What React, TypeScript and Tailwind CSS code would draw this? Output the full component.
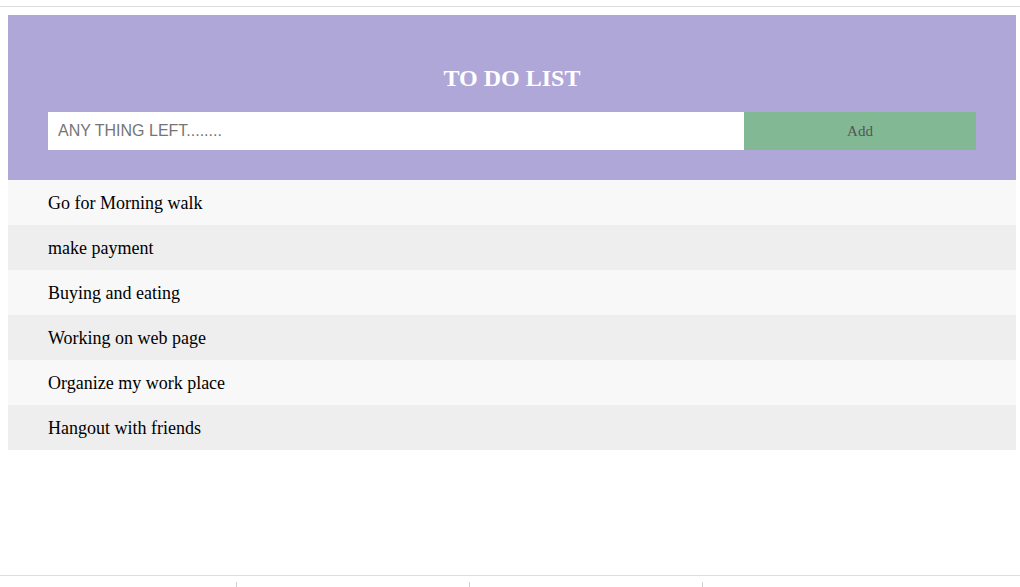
import { useState } from 'react';

const initialTodos = [
  'Go for Morning walk',
  'make payment',
  'Buying and eating',
  'Working on web page',
  'Organize my work place',
  'Hangout with friends',
];

const App = () => {
  const [todos, setTodos] = useState<string[]>(initialTodos);
  const [text, setText] = useState('');

  const addTodo = () => {
    if (!text.trim()) return;
    setTodos((t) => [...t, text.trim()]);
    setText('');
  };

  return (
    <div className="flex h-[587px] flex-col bg-white font-['Liberation_Serif',serif] text-black">
      <div className="h-[6px]" />
      <div className="h-px bg-[#dedede]" />

      <div className="ml-2 mt-2 w-[1008px]">
        {/* Header */}
        <div className="bg-[#afa7d8] px-10 pt-[49px] pb-[30px]">
          <h1 className="mb-[20px] text-center text-[24px] leading-[28px] font-bold text-white">
            TO DO LIST
          </h1>
          <div className="flex h-[38px]">
            <input
              value={text}
              onChange={(e) => setText(e.target.value)}
              placeholder="ANY THING LEFT........"
              className="flex-1 bg-white pl-[10px] font-['Liberation_Sans',sans-serif] text-[16px] text-black outline-none placeholder:text-[#757575]"
            />
            <button
              onClick={addTodo}
              className="w-[232px] bg-[#82b893] text-[15px] text-[#555]"
            >
              Add
            </button>
          </div>
        </div>

        {/* List */}
        <ul>
          {todos.map((todo, i) => (
            <li
              key={i}
              className={
                'flex h-[45px] items-center pt-[2px] pl-10 text-[18px] ' +
                (i % 2 === 0 ? 'bg-[#f8f8f8]' : 'bg-[#eeeeee]')
              }
            >
              {todo}
            </li>
          ))}
        </ul>
      </div>

      {/* bottom rule with ticks */}
      <div className="mt-auto">
        <div className="h-px bg-[#dedede]" />
        <div className="mt-[6px] flex h-[5px]">
          <div className="ml-[236px] w-px bg-[#d0d0d0]" />
          <div className="ml-[232px] w-px bg-[#d0d0d0]" />
          <div className="ml-[232px] w-px bg-[#d0d0d0]" />
        </div>
      </div>
    </div>
  );
};

export default App;
